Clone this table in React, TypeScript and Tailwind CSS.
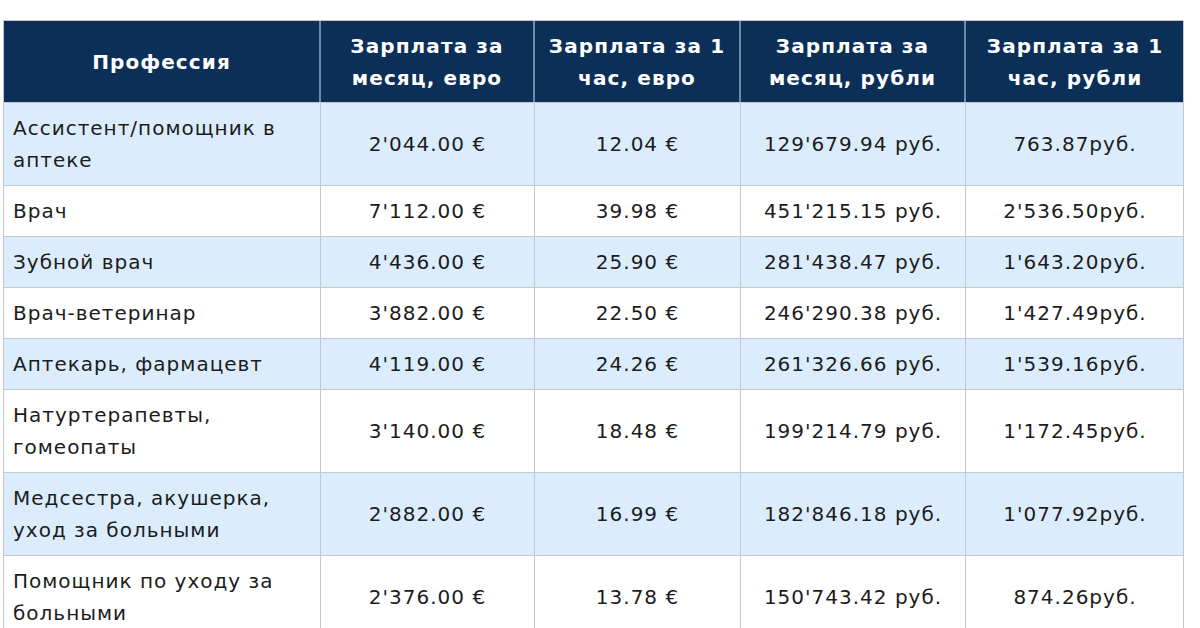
import React from "react";

const rows: { name: string[]; a: string; b: string; c: string; d: string; blue: boolean }[] = [
  { name: ["Ассистент/помощник в", "аптеке"], a: "2'044.00 €", b: "12.04 €", c: "129'679.94 руб.", d: "763.87руб.", blue: true },
  { name: ["Врач"], a: "7'112.00 €", b: "39.98 €", c: "451'215.15 руб.", d: "2'536.50руб.", blue: false },
  { name: ["Зубной врач"], a: "4'436.00 €", b: "25.90 €", c: "281'438.47 руб.", d: "1'643.20руб.", blue: true },
  { name: ["Врач-ветеринар"], a: "3'882.00 €", b: "22.50 €", c: "246'290.38 руб.", d: "1'427.49руб.", blue: false },
  { name: ["Аптекарь, фармацевт"], a: "4'119.00 €", b: "24.26 €", c: "261'326.66 руб.", d: "1'539.16руб.", blue: true },
  { name: ["Натуртерапевты,", "гомеопаты"], a: "3'140.00 €", b: "18.48 €", c: "199'214.79 руб.", d: "1'172.45руб.", blue: false },
  { name: ["Медсестра, акушерка,", "уход за больными"], a: "2'882.00 €", b: "16.99 €", c: "182'846.18 руб.", d: "1'077.92руб.", blue: true },
  { name: ["Помощник по уходу за", "больными"], a: "2'376.00 €", b: "13.78 €", c: "150'743.42 руб.", d: "874.26руб.", blue: false },
];

const cols = "grid grid-cols-[317px_214px_206px_225px_218px]";

export default function App() {
  return (
    <div className="w-[1200px] h-[628px] overflow-hidden bg-white pt-[20px] pl-[3px]" style={{ fontFamily: "'DejaVu Sans', Verdana, sans-serif" }}>
      <div className="w-[1181px] border border-[#c3c8cd]">
        <div className={`${cols} h-[81px] bg-[#0b2f56] text-white font-bold text-[20px] leading-[32px] tracking-[1.1px]`}>
          <div className="flex items-center justify-center border-r-2 border-[#6f8aa8]">Профессия</div>
          <div className="flex items-center justify-center text-center border-r-2 border-[#6f8aa8]">Зарплата за<br />месяц, евро</div>
          <div className="flex items-center justify-center text-center border-r-2 border-[#6f8aa8]">Зарплата за 1<br />час, евро</div>
          <div className="flex items-center justify-center text-center border-r-2 border-[#6f8aa8]">Зарплата за<br />месяц, рубли</div>
          <div className="flex items-center justify-center text-center">Зарплата за 1<br />час, рубли</div>
        </div>
        {rows.map((r, i) => (
          <div key={i} className={`${cols} border-t border-[#c3c8cd] text-[20px] leading-[32px] tracking-[1px] text-[#1c1c1c] ${r.blue ? "bg-[#dbedfc]" : "bg-white"}`}>
            <div className="py-[9px] pl-[9px] border-r border-[#c3c8cd] flex flex-col justify-center whitespace-nowrap">
              {r.name.map((n, j) => (
                <div key={j}>{n}</div>
              ))}
            </div>
            <div className="flex items-center justify-center border-r border-[#c3c8cd]">{r.a}</div>
            <div className="flex items-center justify-center border-r border-[#c3c8cd]">{r.b}</div>
            <div className="flex items-center justify-center border-r border-[#c3c8cd]">{r.c}</div>
            <div className="flex items-center justify-center">{r.d}</div>
          </div>
        ))}
      </div>
    </div>
  );
}
